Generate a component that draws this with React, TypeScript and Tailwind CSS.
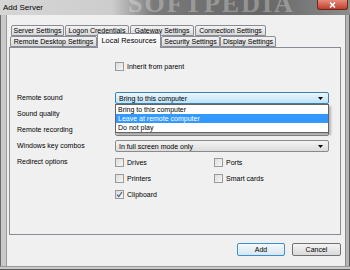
import React from "react";

function Arrow() {
  return (
    <svg width="5" height="3" viewBox="0 0 5 3" className="absolute right-[5px] top-[4px]">
      <path d="M0 0 H5 L2.5 3 Z" fill="#000" />
    </svg>
  );
}

function Combo({ text, focused }: { text: string; focused?: boolean }) {
  return (
    <div
      className={
        "relative w-[214px] h-[12px] rounded-[2px] border flex items-center pl-[3px] leading-none " +
        (focused
          ? "border-[#3c7fb1] bg-gradient-to-b from-[#eaf6fd] to-[#bfe3f7]"
          : "border-[#8a8a8a] bg-gradient-to-b from-[#f4f4f4] to-[#dcdcdc]")
      }
    >
      <span className="whitespace-nowrap">{text}</span>
      <Arrow />
    </div>
  );
}

function Check({ label, checked }: { label: string; checked?: boolean }) {
  return (
    <div className="flex items-center gap-[3px] leading-none">
      <div className="relative w-[9px] h-[9px] border border-[#9a9a9a] bg-gradient-to-br from-[#dcdcdc] to-[#f6f6f6] flex items-center justify-center">
        {checked && (
          <svg width="7" height="7" viewBox="0 0 7 7">
            <path d="M1 3.6 L2.8 5.6 L6 1" stroke="#4a5c8f" strokeWidth="1.2" fill="none" />
          </svg>
        )}
      </div>
      <span className="whitespace-nowrap">{label}</span>
    </div>
  );
}

function Tab({ label, w }: { label: string; w: string }) {
  return (
    <div
      className={
        "h-full border border-[#898c95] rounded-t-[2px] bg-gradient-to-b from-[#f3f3f3] to-[#d9d9d9] flex items-center justify-center leading-none whitespace-nowrap " +
        w
      }
    >
      {label}
    </div>
  );
}

export default function App() {
  return (
    <div className="w-[350px] h-[270px] flex flex-col overflow-hidden bg-[#c6c6c6] text-[7px] text-black font-['Liberation_Sans',Arial,sans-serif]">
      {/* Title bar */}
      <div className="relative h-[15px] shrink-0 flex items-center pl-[3px] bg-[linear-gradient(to_right,#d6d6d6_0%,#cdcdcd_32%,#7a7a7a_44%,#666666_75%,#8c8c8c_100%)] overflow-hidden">
        <span className="text-[8px] text-black relative z-10">Add Server</span>
        <div className="absolute left-[128px] top-[-9px] text-[26px] leading-none tracking-[2px] text-white/30 font-['Liberation_Serif',serif] font-bold whitespace-nowrap">
          SOFTPEDIA
        </div>
        <div className="absolute right-[2px] top-0 w-[31px] h-[10px] rounded-b-[3px] border border-[#6b2a22] border-t-0 bg-gradient-to-b from-[#e58c7a] to-[#c13a2a] flex items-center justify-center">
          <svg width="7" height="6" viewBox="0 0 7 6">
            <path d="M1 0.5 L6 5.5 M6 0.5 L1 5.5" stroke="#fff" strokeWidth="1.6" />
          </svg>
        </div>
      </div>

      <div className="flex flex-1">
        <div className="w-[6px] border-l border-[#6a6a6a] bg-[#c9c9c9]" />
        {/* Client area */}
        <div className="w-[339px] flex flex-col bg-[#f0f0f0] border-l border-[#9a9a9a] pt-[10px] pl-[2px] pr-[4px]">
          {/* Tabs */}
          <div className="flex h-[11px] pl-[2px] gap-[1px]">
            <Tab label="Server Settings" w="w-[53px]" />
            <Tab label="Logon Credentials" w="w-[64px]" />
            <Tab label="Gateway Settings" w="w-[64px]" />
            <Tab label="Connection Settings" w="w-[71px]" />
          </div>
          <div className="flex h-[11px] pl-[1px] items-end">
            <Tab label="Remote Desktop Settings" w="w-[87px]" />
            <div className="relative z-10 w-[64px] h-[15px] -mb-[1px] border border-b-0 border-[#898c95] rounded-t-[2px] bg-gradient-to-b from-white to-[#f0f0f0] flex items-center justify-center leading-none whitespace-nowrap text-[7.4px] pb-[1px]">
              Local Resources
            </div>
            <Tab label="Security Settings" w="w-[59px]" />
            <Tab label="Display Settings" w="w-[56px]" />
          </div>

          {/* Panel */}
          <div className="relative h-[188px] border border-[#898c95] bg-[#f0f0f0] pt-[10px] pl-[7px]">
            <div className="grid grid-cols-[98px_99px_auto] auto-rows-[16px] items-center">
              <div />
              <div className="col-span-2">
                <Check label="Inherit from parent" />
              </div>

              <div />
              <div />
              <div />

              <div>Remote sound</div>
              <div className="col-span-2 relative">
                <Combo text="Bring to this computer" focused />
                <div className="absolute left-0 top-[12px] z-20 w-[214px] h-[29px] bg-white border border-[#646464] shadow-[2px_2px_2px_rgba(0,0,0,0.25)] flex flex-col leading-none">
                  <div className="h-[9px] flex items-center pl-[2px]">Bring to this computer</div>
                  <div className="h-[9px] flex items-center pl-[2px] bg-[#3399ff] text-white">Leave at remote computer</div>
                  <div className="h-[9px] flex items-center pl-[2px]">Do not play</div>
                </div>
              </div>

              <div>Sound quality</div>
              <div className="col-span-2">
                <Combo text="" />
              </div>

              <div>Remote recording</div>
              <div className="col-span-2">
                <Combo text="" />
              </div>

              <div className="h-[17px] flex items-center">Windows key combos</div>
              <div className="col-span-2 h-[17px] flex items-center">
                <Combo text="In full screen mode only" />
              </div>

              <div>Redirect options</div>
              <div>
                <Check label="Drives" />
              </div>
              <div>
                <Check label="Ports" />
              </div>

              <div className="h-[15px]" />
              <div className="h-[15px] flex items-center">
                <Check label="Printers" />
              </div>
              <div className="h-[15px] flex items-center">
                <Check label="Smart cards" />
              </div>

              <div />
              <div>
                <Check label="Clipboard" checked />
              </div>
              <div />
            </div>
          </div>

          {/* Buttons */}
          <div className="mt-[8px] flex justify-end gap-[7px]">
            <button className="w-[48px] h-[13px] rounded-[2px] border border-[#3c8fd1] bg-gradient-to-b from-[#f4f9fd] to-[#d8e6f0] text-[7px] leading-none flex items-center justify-center">
              Add
            </button>
            <button className="w-[49px] h-[13px] rounded-[2px] border border-[#707070] bg-gradient-to-b from-[#f4f4f4] to-[#dadada] text-[7px] leading-none flex items-center justify-center">
              Cancel
            </button>
          </div>
        </div>
        <div className="w-[5px] border-l border-[#8a8a8a] bg-[#b4b4b4] border-r border-r-[#5a5a5a]" />
      </div>
      <div className="h-[4px] shrink-0 bg-[#c9c9c9] border-t border-[#9a9a9a] border-b border-b-[#5a5a5a]" />
    </div>
  );
}
